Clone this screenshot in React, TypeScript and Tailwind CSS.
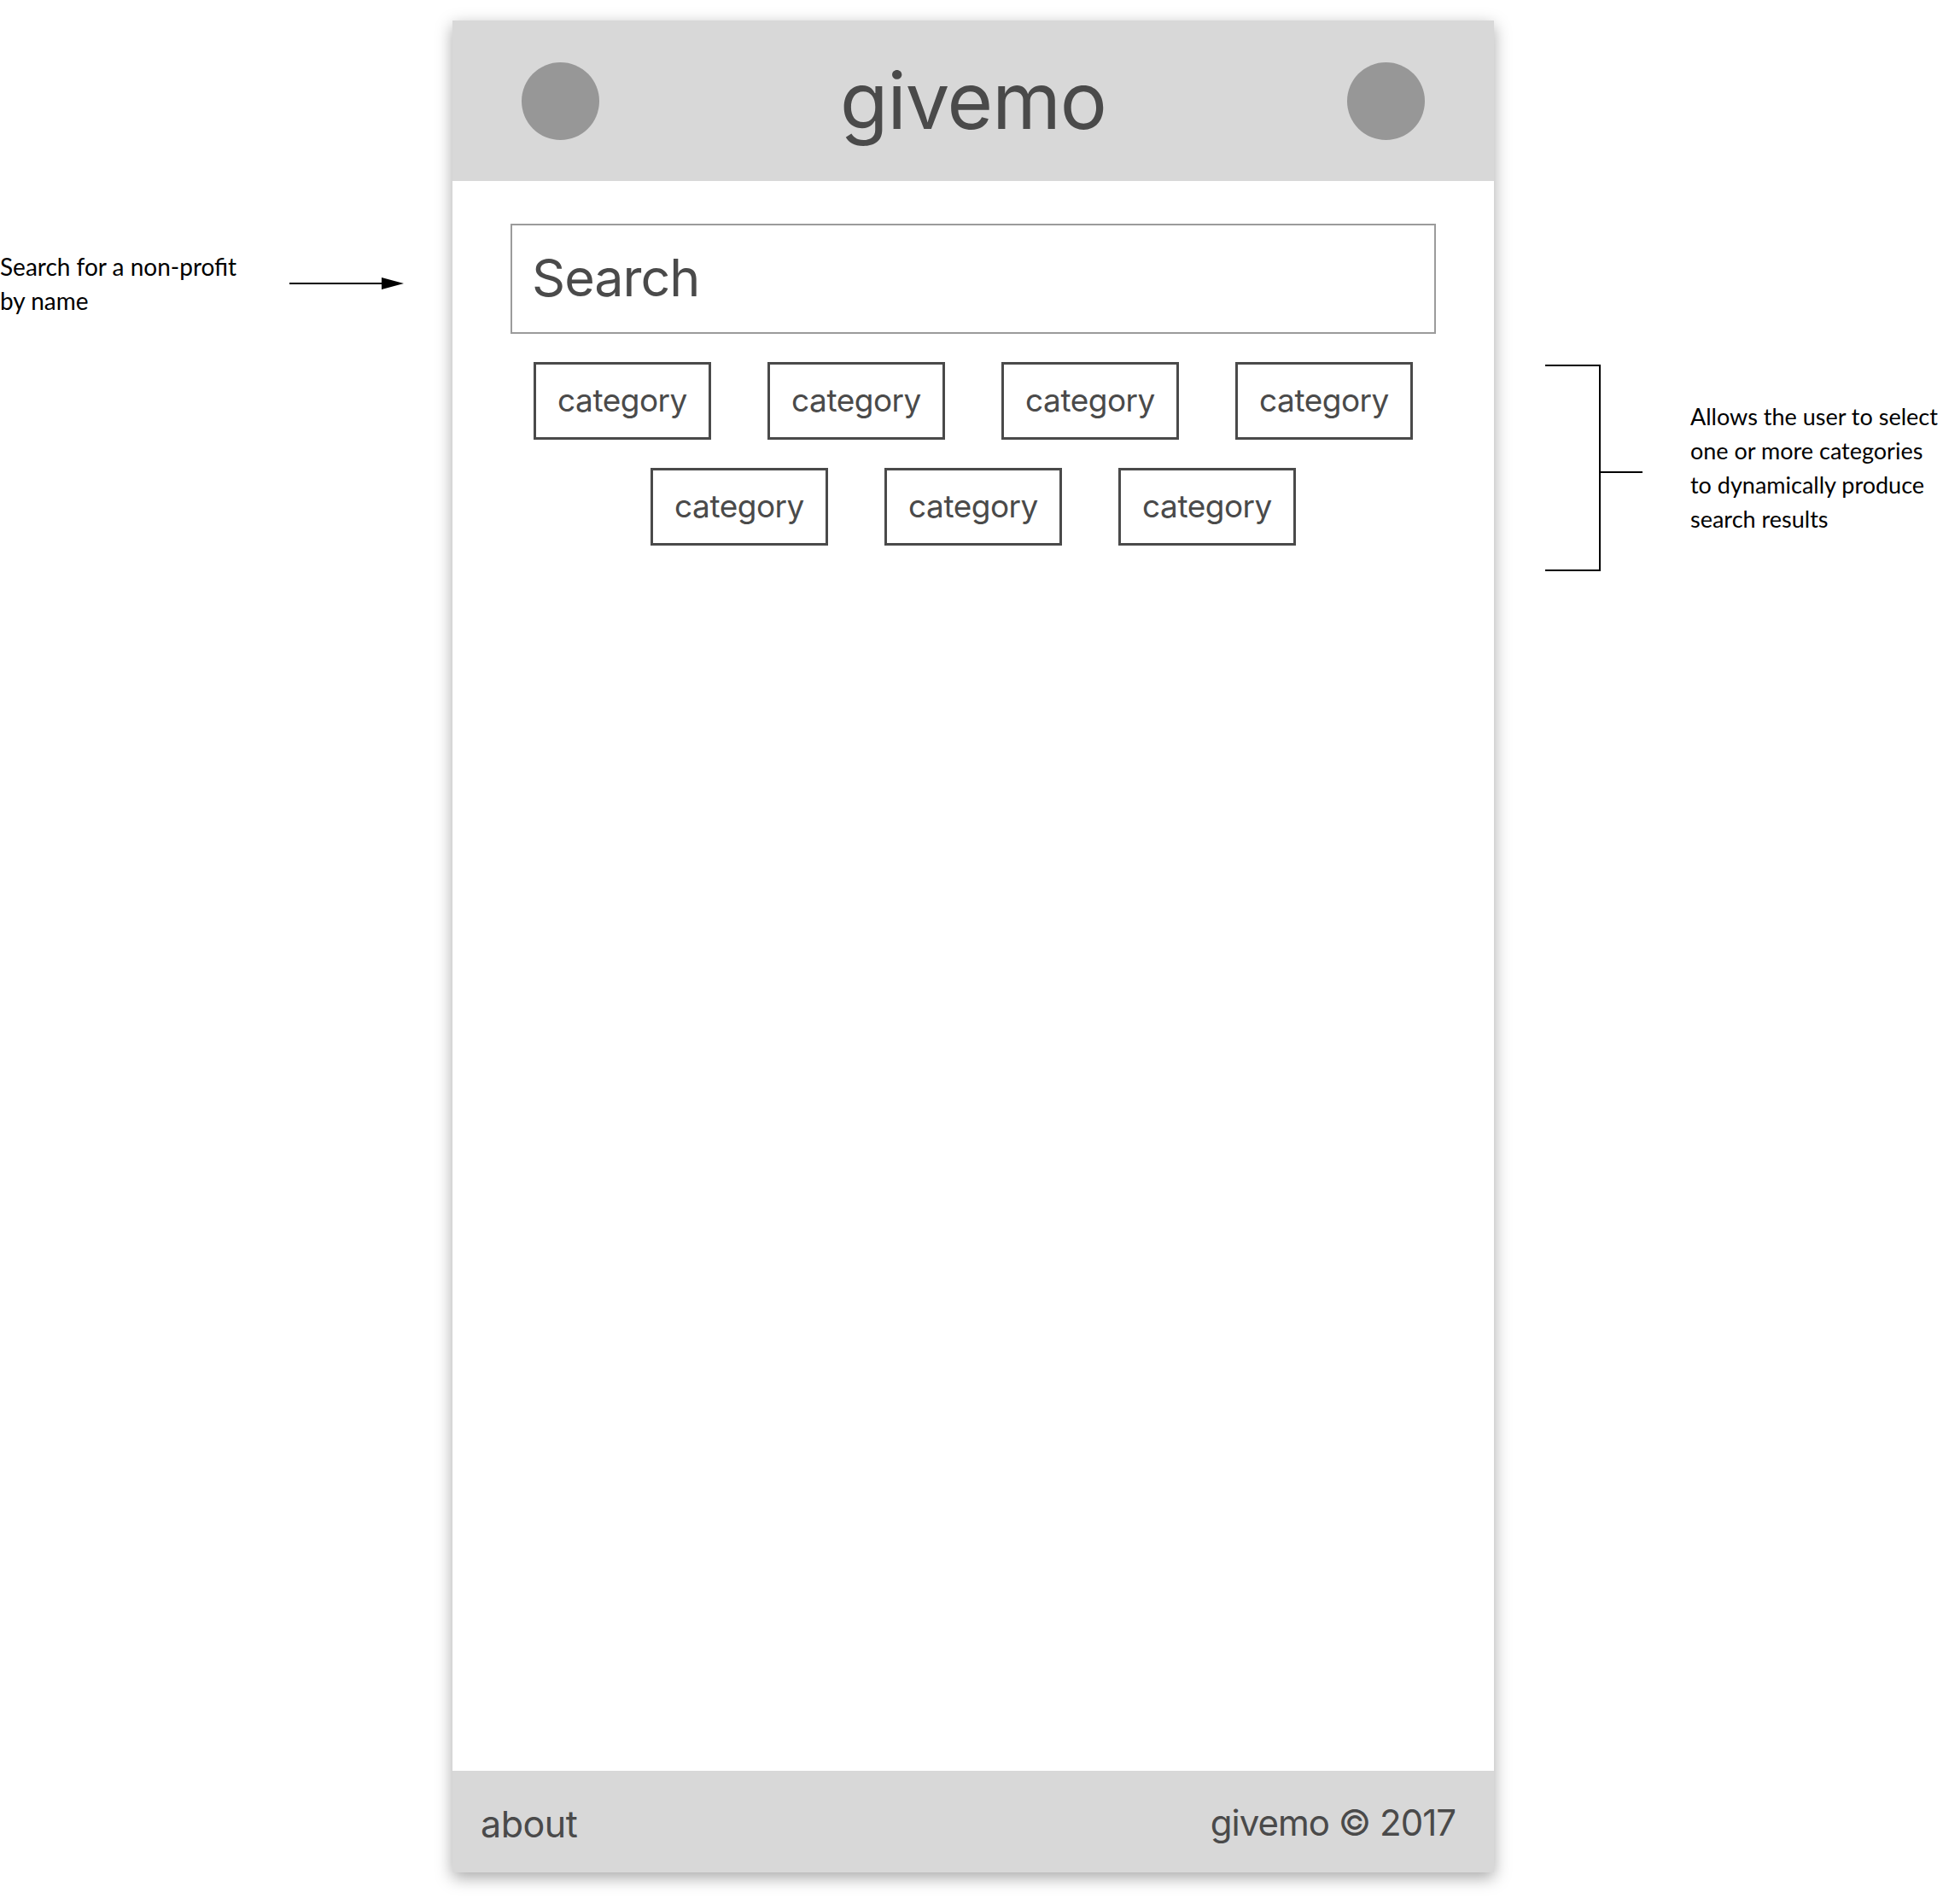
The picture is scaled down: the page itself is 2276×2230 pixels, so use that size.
import React from "react";

const sf = { fontFamily: "Inter, 'Noto Sans', sans-serif" };
const lato = { fontFamily: "Lato, 'Noto Sans', sans-serif" };

function Category() {
  return (
    <div
      className="w-[208px] h-[91px] border-[3px] border-[#4a4a4a] flex items-center justify-center text-[37px] text-[#4a4a4a] tracking-[-0.5px]"
      style={sf}
    >
      <span className="-mt-[2px]">category</span>
    </div>
  );
}

export default function App() {
  return (
    <div className="flex w-[2276px] h-[2230px] bg-white pt-[24px] overflow-hidden">
      {/* left annotation */}
      <div className="w-[530px] shrink-0 pt-[268px] flex items-start">
        <div className="w-[339px] text-[28px] leading-[40px] text-black whitespace-nowrap" style={lato}>
          Search for a non-profit
          <br />
          by name
        </div>
        <svg width="136" height="16" viewBox="0 0 136 16" className="mt-[32px]">
          <line x1="0" y1="8" x2="112" y2="8" stroke="black" strokeWidth="2" />
          <polygon points="108,1 134,8 108,15" fill="black" />
        </svg>
      </div>

      {/* phone frame */}
      <div className="w-[1220px] h-[2169px] shrink-0 flex flex-col bg-white shadow-[0_6px_18px_rgba(0,0,0,0.35)]">
        <div className="h-[188px] bg-[#d8d8d8] flex items-center justify-between px-[81px]">
          <div className="w-[91px] h-[91px] rounded-full bg-[#979797]" />
          <div className="text-[92px] text-[#4a4a4a] leading-none tracking-[-1px]" style={sf}>
            givemo
          </div>
          <div className="w-[91px] h-[91px] rounded-full bg-[#979797]" />
        </div>
        <div className="flex-1 bg-white px-[68px] pt-[50px]">
          <div className="h-[129px] border-[2px] border-[#9b9b9b] flex items-center pl-[23px]">
            <span className="text-[61px] text-[#4a4a4a] tracking-[-1px] -mt-[2px]" style={sf}>
              Search
            </span>
          </div>
          <div className="mt-[33px] flex flex-wrap justify-center gap-x-[66px] gap-y-[33px] px-[20px]">
            {Array.from({ length: 7 }).map((_, i) => (
              <Category key={i} />
            ))}
          </div>
        </div>
        <div className="h-[119px] bg-[#d8d8d8] flex items-center justify-between pl-[33px] pr-[45px]">
          <span className="text-[43px] text-[#4a4a4a] tracking-[-0.5px] mt-[6px]" style={sf}>
            about
          </span>
          <span className="text-[42px] text-[#4a4a4a] tracking-[-1px] mt-[2px]" style={sf}>
            givemo © 2017
          </span>
        </div>
      </div>

      {/* right annotation */}
      <div className="flex-1 pt-[402px] flex items-start">
        <svg width="116" height="244" viewBox="0 0 116 244" className="ml-[58px] shrink-0">
          <polyline points="2,2 66,2 66,242 2,242" fill="none" stroke="black" strokeWidth="2" />
          <line x1="66" y1="127" x2="116" y2="127" stroke="black" strokeWidth="2" />
        </svg>
        <div className="ml-[56px] mt-[42px] text-[27px] leading-[40px] text-black whitespace-nowrap" style={lato}>
          Allows the user to select
          <br />
          one or more categories
          <br />
          to dynamically produce
          <br />
          search results
        </div>
      </div>
    </div>
  );
}
